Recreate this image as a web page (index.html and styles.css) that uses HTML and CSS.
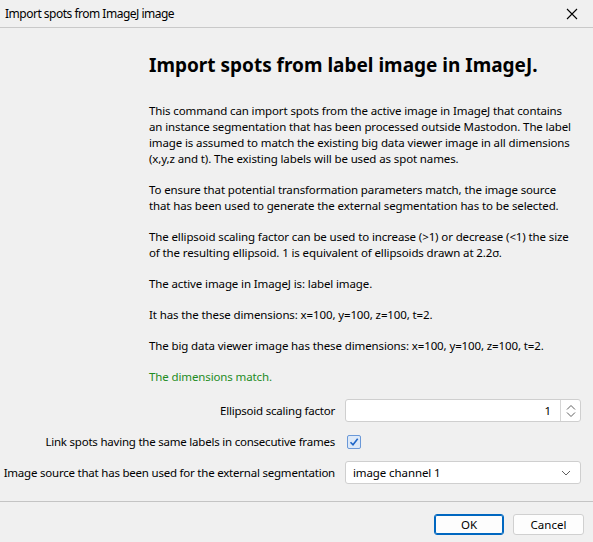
FILE: index.html
```html
<!DOCTYPE html>
<html>
<head>
<meta charset="utf-8">
<link rel="stylesheet" href="styles.css">
</head>
<body>
<div class="window">
  <div class="titlebar">
    <span class="title">Import spots from ImageJ image</span>
    <svg class="close" width="12" height="12" viewBox="0 0 12 12"><path d="M1 1L11 11M11 1L1 11" stroke="#000" stroke-width="1.1" fill="none"/></svg>
  </div>
  <div class="content">
    <div class="info">
      <h1 class="heading">Import spots from label image in ImageJ.</h1>
      <p class="para">This command can import spots from the active image in ImageJ that contains<br>an instance segmentation that has been processed outside Mastodon. The label<br>image is assumed to match the existing big data viewer image in all dimensions<br>(x,y,z and t). The existing labels will be used as spot names.</p>
      <p class="para">To ensure that potential transformation parameters match, the image source<br>that has been used to generate the external segmentation has to be selected.</p>
      <p class="para">The ellipsoid scaling factor can be used to increase (&gt;1) or decrease (&lt;1) the size<br>of the resulting ellipsoid. 1 is equivalent of ellipsoids drawn at 2.2σ.</p>
      <p class="para">The active image in ImageJ is: label image.</p>
      <p class="para">It has the these dimensions: x=100, y=100, z=100, t=2.</p>
      <p class="para">The big data viewer image has these dimensions: x=100, y=100, z=100, t=2.</p>
      <p class="para ok-text">The dimensions match.</p>
    </div>
    <div class="form">
      <label class="lbl">Ellipsoid scaling factor</label>
      <div class="spinner">
        <span class="spin-value">1</span>
        <span class="spin-btn">
          <svg width="10" height="14" viewBox="0 0 10 14"><path d="M1 5.5L5 1.5L9 5.5M1 8.5L5 12.5L9 8.5" stroke="#606060" stroke-width="1" fill="none"/></svg>
        </span>
      </div>
      <label class="lbl">Link spots having the same labels in consecutive frames</label>
      <div class="check-cell">
        <span class="checkbox">
          <svg width="10" height="10" viewBox="0 0 10 10"><path d="M1.5 5.2L4 7.8L8.7 1.8" stroke="#1f66c8" stroke-width="1.6" fill="none"/></svg>
        </span>
      </div>
      <label class="lbl">Image source that has been used for the external segmentation</label>
      <div class="combo">
        <span class="combo-value">image channel 1</span>
        <svg class="combo-arrow" width="10" height="6" viewBox="0 0 10 6"><path d="M1 1L5 5L9 1" stroke="#606060" stroke-width="1" fill="none"/></svg>
      </div>
    </div>
  </div>
  <div class="footer">
    <button class="btn btn-default">OK</button>
    <button class="btn">Cancel</button>
  </div>
</div>
</body>
</html>
```
FILE: styles.css
```css
html, body {
  margin: 0;
  padding: 0;
  background: #f0f0f0;
}
body {
  font-family: "Noto Sans", "Open Sans", sans-serif;
  font-size: 11.5px;
  color: #000;
  width: 593px;
  height: 542px;
  overflow: hidden;
}
.window {
  display: flex;
  flex-direction: column;
  height: 542px;
}
.titlebar {
  height: 27px;
  border-bottom: 1px solid #c9c9c9;
  display: flex;
  align-items: center;
  justify-content: space-between;
  padding: 0 15px 0 5px;
  box-sizing: content-box;
}
.title {
  font-size: 12px;
  letter-spacing: -0.5px;
}
.close {
  display: block;
}
.content {
  flex: 1;
}
.info {
  padding-left: 149px;
  padding-top: 25px;
}
.heading {
  margin: 0 0 26px 0;
  font-size: 19px;
  line-height: 24px;
  font-weight: bold;
  letter-spacing: 0;
}
.para {
  margin: 0 0 15px 0;
  line-height: 16px;
  white-space: nowrap;
  letter-spacing: -0.12px;
}
.ok-text {
  color: #1e8c1e;
  margin-bottom: 0;
}
.form {
  display: grid;
  grid-template-columns: 335px 236px;
  column-gap: 10px;
  row-gap: 8px;
  margin-top: 14px;
  align-items: center;
}
.lbl {
  text-align: right;
  white-space: nowrap;
  letter-spacing: -0.22px;
}
.spinner, .combo {
  height: 23px;
  box-sizing: border-box;
  background: #fff;
  border: 1px solid #cfcfcf;
  border-radius: 3px;
  display: flex;
  align-items: center;
}
.spin-value {
  flex: 1;
  text-align: right;
  padding-right: 9px;
}
.spin-btn {
  width: 19px;
  height: 100%;
  border-left: 1px solid #d6d6d6;
  display: flex;
  align-items: center;
  justify-content: center;
}
.check-cell {
  height: 23px;
  display: flex;
  align-items: center;
}
.checkbox {
  width: 14px;
  height: 14px;
  box-sizing: border-box;
  margin-left: 2px;
  border: 1px solid #6a98d8;
  border-radius: 2px;
  background: #dde9f8;
  display: flex;
  align-items: center;
  justify-content: center;
}
.combo {
  justify-content: space-between;
  padding: 0 9px 0 7px;
}
.combo-value {
  letter-spacing: -0.1px;
}
.footer {
  border-top: 1px solid #c4c4c4;
  height: 41px;
  display: flex;
  justify-content: flex-end;
  align-items: flex-start;
  padding: 12px 9px 0 0;
  box-sizing: border-box;
  gap: 9px;
}
.btn {
  font-family: "Noto Sans", "Open Sans", sans-serif;
  font-size: 11.5px;
  height: 21px;
  width: 71px;
  padding: 0;
  background: #fdfdfd;
  border: 1px solid #d0d0d0;
  border-radius: 3px;
  color: #000;
}
.btn-default {
  border: 1px solid #0067c0;
  box-shadow: inset 0 0 0 1px #0067c0;
  width: 70px;
}
```
